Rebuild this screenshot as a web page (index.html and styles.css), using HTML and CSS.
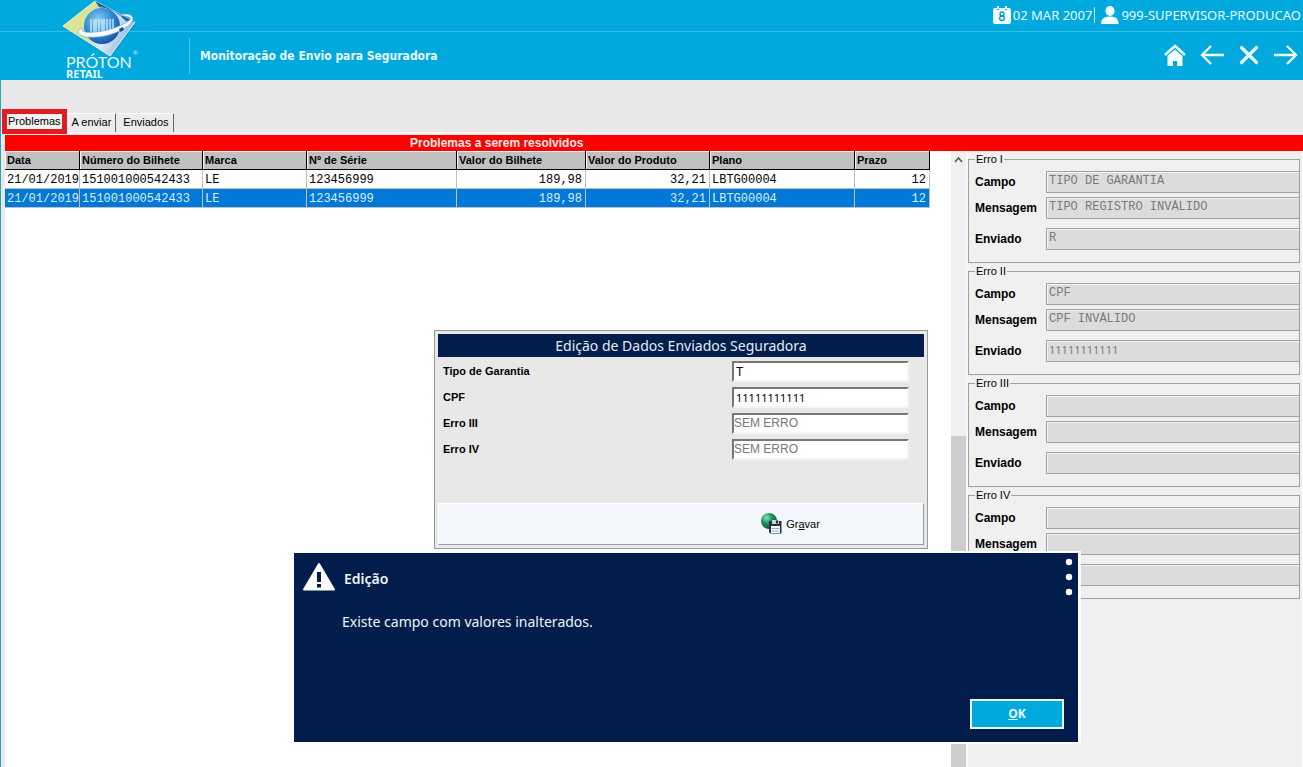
FILE: index.html
```html
<!DOCTYPE html>
<html lang="pt-BR">
<head>
<meta charset="utf-8">
<title>Monitoração de Envio para Seguradora</title>
<link rel="stylesheet" href="styles.css">
</head>
<body>
<header class="header">
  <div class="status">
    <svg width="18" height="18" viewBox="0 0 18 18" aria-hidden="true">
      <path fill="#f0ffff" d="M2 2h2v2h2V2h6v2h2V2h2q2 0 2 2v12q0 2-2 2H2q-2 0-2-2V4q0-2 2-2z"/>
      <path fill="#f0ffff" d="M4 0h2v3H4zM12 0h2v3h-2z"/>
      <circle cx="9" cy="8" r="2" fill="none" stroke="#0a8fc0" stroke-width="1.3"/>
      <circle cx="9" cy="12.2" r="2.3" fill="none" stroke="#0a8fc0" stroke-width="1.3"/>
    </svg>
    <span class="date">02 MAR 2007</span>
    <span class="sep"></span>
    <svg width="18" height="18" viewBox="0 0 18 18" aria-hidden="true">
      <ellipse cx="9" cy="5" rx="4.6" ry="5" fill="#f0ffff"/>
      <path fill="#f0ffff" d="M0 18q0-5 3.5-6.500L7 10.500h4l3.500 1Q17.500 13 17.500 18z"/>
    </svg>
    <span>999-SUPERVISOR-PRODUCAO</span>
  </div>
  <div class="logo">
    <svg width="90" height="80" viewBox="0 0 90 80" role="img" aria-label="Próton Retail">
      <defs>
        <linearGradient id="sq" x1="0" y1="0.300" x2="1" y2="0.700">
          <stop offset="0" stop-color="#dfe58a"/><stop offset="0.450" stop-color="#d3e3a0"/>
          <stop offset="0.650" stop-color="#dbe6f6"/><stop offset="1" stop-color="#7fa6dc"/>
        </linearGradient>
        <radialGradient id="gl" cx="0.400" cy="0.350" r="0.700">
          <stop offset="0" stop-color="#8fd0f5"/><stop offset="0.600" stop-color="#2b86d2"/><stop offset="1" stop-color="#134f9c"/>
        </radialGradient>
      </defs>
      <path d="M9 30l42 27 25-32-4-2-22 29z" fill="#087da8" opacity="0.400"/>
      <path d="M36 1l40 21-25 34L4 26z" fill="url(#sq)" stroke="#edf4d8"/>
      <path d="M36 1l40 21-9-1Q55 8 40 7z" fill="#1764ae"/>
      <circle cx="43" cy="26" r="18" fill="url(#gl)"/>
      <path d="M32 19v13M35 19v13M37 19v13M40 19v13M43 19v13M45 19v13M48 19v13M51 19v13M54 19v13" stroke="#d4efff" stroke-width="1.300"/>
      <path d="M60 15c12-3 17 2 12 8-8 9-29 16-44 14-12-2-10-7-5-9-1 4 4 5 13 4 17-1 38-11 35-14-2-2-6-2-11-3z" fill="#f6fbff" stroke="#6ba4d4" stroke-width="0.600"/>
      <path d="M60 29l4-2 1 3-4 2z" fill="#0d4d9e"/>
      <text x="7" y="68" class="logo-name">PRÓTON</text>
      <text x="74" y="55" class="logo-reg">®</text>
      <text x="7" y="78" class="logo-sub">RETAIL</text>
    </svg>
  </div>
  <h1 class="title">Monitoração de Envio para Seguradora</h1>
  <nav class="nav">
    <button type="button" aria-label="Início"><svg width="24" height="24" viewBox="0 0 24 24"><path d="M2 12L12 3l10 9" fill="none" stroke="#f0ffff" stroke-width="2.500"/><path d="M4.500 13L12 6.500 19.500 13v10H14v-5h-4v5H4.500z" fill="#f0ffff"/></svg></button>
    <button type="button" aria-label="Voltar"><svg width="24" height="24" viewBox="0 0 24 24"><path d="M24 12H2M11 3L2 12l9 9" fill="none" stroke="#f0ffff" stroke-width="2.400"/></svg></button>
    <button type="button" aria-label="Fechar"><svg width="24" height="24" viewBox="0 0 24 24"><path d="M4.500 4.500l15 15M19.500 4.500l-15 15" fill="none" stroke="#f0ffff" stroke-width="3.200" stroke-linecap="round"/></svg></button>
    <button type="button" aria-label="Avançar"><svg width="24" height="24" viewBox="0 0 24 24"><path d="M0 12h22M13 3l9 9-9 9" fill="none" stroke="#f0ffff" stroke-width="2.400"/></svg></button>
  </nav>
</header>

<main class="page">
  <div class="tabs" role="tablist">
    <button type="button" role="tab" aria-selected="true" class="tab tab-active">Problemas</button>
    <button type="button" role="tab" class="tab">A enviar</button>
    <button type="button" role="tab" class="tab">Enviados</button>
  </div>
  <h2 class="banner">Problemas a serem resolvidos</h2>
  <div class="work">
    <section class="list">
      <table class="grid">
        <colgroup><col class="c-date"><col class="c-ticket"><col class="c-brand"><col class="c-serial"><col class="c-value"><col class="c-product"><col class="c-plan"><col class="c-term"></colgroup>
        <thead><tr><th>Data</th><th>Número do Bilhete</th><th>Marca</th><th>Nº de Série</th><th>Valor do Bilhete</th><th>Valor do Produto</th><th>Plano</th><th>Prazo</th></tr></thead>
        <tbody>
          <tr><td>21/01/2019</td><td>151001000542433</td><td>LE</td><td>123456999</td><td class="num">189,98</td><td class="num">32,21</td><td>LBTG00004</td><td class="num">12</td></tr>
          <tr class="selected"><td>21/01/2019</td><td>151001000542433</td><td>LE</td><td>123456999</td><td class="num">189,98</td><td class="num">32,21</td><td>LBTG00004</td><td class="num">12</td></tr>
        </tbody>
      </table>
    </section>
    <div class="scrollbar">
      <svg width="15" height="18" viewBox="0 0 15 18" aria-hidden="true"><path d="M4 11l3.500-4L11 11" fill="none" stroke="#555" stroke-width="1.600"/></svg>
      <div class="thumb"></div>
    </div>
    <aside class="errors">
      <fieldset class="error"><legend>Erro I</legend>
        <label for="c1">Campo</label><input id="c1" value="TIPO DE GARANTIA" disabled>
        <label for="m1">Mensagem</label><input id="m1" value="TIPO REGISTRO INVÁLIDO" disabled>
        <label for="e1" class="sent">Enviado</label><input id="e1" class="sent" value="R" disabled>
      </fieldset>
      <fieldset class="error"><legend>Erro II</legend>
        <label for="c2">Campo</label><input id="c2" value="CPF" disabled>
        <label for="m2">Mensagem</label><input id="m2" value="CPF INVÁLIDO" disabled>
        <label for="e2" class="sent">Enviado</label><input id="e2" class="sent doc" value="11111111111" disabled>
      </fieldset>
      <fieldset class="error"><legend>Erro III</legend>
        <label for="c3">Campo</label><input id="c3" disabled>
        <label for="m3">Mensagem</label><input id="m3" disabled>
        <label for="e3" class="sent">Enviado</label><input id="e3" class="sent" disabled>
      </fieldset>
      <fieldset class="error"><legend>Erro IV</legend>
        <label for="c4">Campo</label><input id="c4" disabled>
        <label for="m4">Mensagem</label><input id="m4" disabled>
        <label for="e4" class="sent">Enviado</label><input id="e4" class="sent" disabled>
      </fieldset>
    </aside>
  </div>
</main>

<section class="editor" role="dialog" aria-labelledby="editor-title">
  <h2 id="editor-title" class="editor-title">Edição de Dados Enviados Seguradora</h2>
  <form class="editor-form">
    <label for="f1">Tipo de Garantia</label><input id="f1" value="T">
    <label for="f2">CPF</label><input id="f2" class="doc" value="11111111111">
    <label for="f3">Erro III</label><input id="f3" value="SEM ERRO" disabled>
    <label for="f4">Erro IV</label><input id="f4" value="SEM ERRO" disabled>
  </form>
  <div class="editor-foot">
    <button type="button" class="save">
      <svg width="21" height="21" viewBox="0 0 21 21" aria-hidden="true">
        <defs><radialGradient id="ball" cx="0.350" cy="0.300" r="0.750"><stop offset="0" stop-color="#8fe0b4"/><stop offset="0.450" stop-color="#1f9660"/><stop offset="1" stop-color="#0a4a30"/></radialGradient></defs>
        <circle cx="8" cy="8" r="8" fill="url(#ball)"/>
        <path d="M8 8h12.500v12.500H9.500L8 19z" fill="#25343f"/>
        <path d="M11 7h7v4h-7z" fill="#c4d3dc"/><path d="M15 7.500h2v3h-2z" fill="#25343f"/>
        <path d="M10 13h9v7h-9z" fill="#fff"/><path d="M10.500 15.500h8M10.500 18h8" stroke="#7fb0c8"/>
      </svg>
      <span>Gr<u>a</u>var</span>
    </button>
  </div>
</section>

<section class="alert" role="alertdialog" aria-labelledby="alert-title">
  <div class="alert-head">
    <svg width="34" height="30" viewBox="0 0 34 30" aria-hidden="true"><path d="M17 2L32 27.500H2z" fill="#fff" stroke="#fff" stroke-width="2" stroke-linejoin="round"/><path d="M15 10h4v10h-4zM15 22h4v3.500h-4z" fill="#001d4b"/></svg>
    <h2 id="alert-title">Edição</h2>
    <button type="button" class="more" aria-label="Mais opções"><svg width="8" height="38" viewBox="0 0 8 38"><g fill="#fff"><circle cx="4" cy="4" r="3.200"/><circle cx="4" cy="19" r="3.200"/><circle cx="4" cy="34" r="3.200"/></g></svg></button>
  </div>
  <p>Existe campo com valores inalterados.</p>
  <button type="button" class="ok"><u>O</u>K</button>
</section>
</body>
</html>
```

FILE: styles.css
```css
* { box-sizing: border-box; }

body {
  margin: 0;
  min-height: 100vh;
  display: flex;
  flex-direction: column;
  position: relative;
  background: #e8e8e8;
  color: #000;
  font: 11px/14px "Liberation Sans", Arial, sans-serif;
}

h1, h2, p { margin: 0; }
button { border: 0; padding: 0; background: none; font: inherit; color: inherit; }
svg { display: block; }

/* Header */
.header {
  display: grid;
  grid-template-columns: 189px 1fr auto;
  grid-template-rows: 32px 48px;
  background: #00a9dd;
  color: #e6fbff;
}
.status {
  grid-area: 1 / 1 / 2 / -1;
  display: flex;
  justify-content: flex-end;
  align-items: center;
  gap: 2px;
  padding: 0 2px 1px 0;
  border-bottom: 1px solid #35bde5;
  font: 13px/18px "Noto Sans", "Open Sans", sans-serif;
}
.status .sep { width: 1px; height: 16px; background: #c4f1fc; margin-right: 4px; }
.logo { grid-area: 1 / 1 / 3 / 2; padding-left: 59px; }
.logo-name { font: 16px Lato, sans-serif; fill: #e6fbff; }
.logo-sub { font: bold 11px "Noto Sans", sans-serif; fill: #e6fbff; }
.logo-reg { font: 6px "Liberation Sans", sans-serif; fill: #e6fbff; }
.title {
  grid-area: 2 / 2;
  align-self: center;
  padding-left: 10px;
  border-left: 1px solid #4cc6e9;
  font: bold 12px/36px "DejaVu Sans Condensed", "DejaVu Sans", sans-serif;
}
.nav { grid-area: 2 / 3; display: flex; align-items: center; gap: 13px; padding: 0 5px 2px 0; }

/* Tabs */
.page { flex: 1; display: flex; flex-direction: column; border-left: 1px solid #2f9fb8; }
.tabs {
  display: flex;
  align-items: flex-end;
  padding: 29px 0 0 1px;
  height: 54px;
  border-bottom: 2px solid #fbf3f3;
}
.tab {
  height: 19px;
  margin-right: 2px;
  padding: 0 4px 2px 5px;
  border-right: 1px solid #666;
  border-top: 1px solid #fff;
  background: #ececec;
}
.tab-active {
  height: 25px;
  margin: 0;
  margin-bottom: -2px;
  border: 5px solid #e01b24;
  padding: 0 1px 2px 1px;
  background: #f2f2f2;
}
.banner {
  margin: 1px 0 0 4px;
  padding-left: 405px;
  background: #fe0000;
  color: #ffe9e9;
  font: bold 12px/16px "Liberation Sans", Arial, sans-serif;
}

/* Work area */
.work { flex: 1; display: flex; padding-left: 4px; }
.list { flex: 1; min-width: 0; background: #fff; }
.grid { width: 925px; border-collapse: separate; border-spacing: 0; table-layout: fixed; }
.c-date { width: 75px; }
.c-ticket { width: 123px; }
.c-brand { width: 104px; }
.c-serial { width: 150px; }
.c-value { width: 129px; }
.c-product { width: 124px; }
.c-plan { width: 145px; }
.c-term { width: 75px; }
.grid th, .grid td { height: 19px; padding: 0 2px; white-space: nowrap; overflow: hidden; text-align: left; }
.grid th {
  background: #c0c0c0;
  border-right: 1px solid #000;
  border-bottom: 1px solid #000;
  box-shadow: inset 1px 1px #f4f4f4;
  font: bold 11px/16px "Liberation Sans", Arial, sans-serif;
}
.grid td {
  padding-top: 2px;
  border-right: 1px solid #c0c0c0;
  border-bottom: 1px solid #c0c0c0;
  font: 12px/16px "Liberation Mono", "Courier New", monospace;
}
.grid td.num { text-align: right; padding-right: 3px; }
.grid .selected td { background: #0078d7; color: #d8f0ff; }

.scrollbar { width: 17px; display: flex; flex-direction: column; background: #f0f0f0; border-right: 2px solid #f8f8f8; }
.thumb { flex: 1; margin-top: 267px; background: #cdcdcd; }

/* Error details */
.errors { width: 335px; padding: 1px 2px 0 0; background: #f0f0f0; border-right: 1px solid #fff; }
.error {
  display: grid;
  grid-template-columns: 71px 1fr;
  row-gap: 4px;
  align-items: center;
  margin: 0 0 1px;
  padding: 5px 0 12px 6px;
  border: 1px solid #a0a0a0;
  min-width: 0;
}
.error legend { padding: 0 1px; line-height: 14px; }
.error label { font-size: 12px; font-weight: bold; }
.error .sent { margin-top: 5px; }
.error input {
  width: 100%;
  min-width: 0;
  height: 22px;
  padding: 0 2px 3px;
  border: 1px solid #a0a0a0;
  border-right: 0;
  border-radius: 0;
  box-shadow: inset 1px 1px #f4f4f4;
  background: #dcdcdc;
  color: #7a7a7a;
  font: 12px/16px "Liberation Mono", "Courier New", monospace;
}
.error input.doc { font: 11px/16px "Noto Sans", sans-serif; }

/* Edit window */
.editor {
  position: absolute;
  left: 434px;
  top: 330px;
  width: 494px;
  padding: 3px;
  border: 1px solid #999;
  background: #e8e8e8;
}
.editor-title {
  background: #001d4b;
  color: #e4ecf4;
  text-align: center;
  font: 14px/23px "Noto Sans", "Open Sans", sans-serif;
}
.editor-form {
  display: grid;
  grid-template-columns: 1fr 177px;
  row-gap: 5px;
  align-items: center;
  padding: 4px 15px 43px 5px;
}
.editor-form label { font-weight: bold; padding-bottom: 2px; }
.editor-form input {
  width: 100%;
  height: 21px;
  padding: 0 2px;
  border: 2px solid;
  border-color: #777 #f4f4f4 #f4f4f4 #777;
  border-radius: 0;
  background: #fff;
  color: #000;
  font: 12px/16px "Liberation Sans", Arial, sans-serif;
}
.editor-form input:disabled { color: #777; padding: 0 0 2px; }
.editor-form input.doc { font: 11px/16px "Noto Sans", sans-serif; }
.editor-foot {
  display: flex;
  justify-content: center;
  padding: 9px 0 10px 219px;
  border: 1px solid;
  border-color: #fff #999 #999 #fff;
  background: #f3f7fc;
}
.save { display: flex; align-items: center; gap: 4px; }

/* Alert window */
.alert {
  position: absolute;
  left: 294px;
  top: 551px;
  width: 787px;
  padding: 5px 14px 13px 8px;
  display: flex;
  flex-direction: column;
  border: solid #fff;
  border-width: 2px 3px 2px 0;
  background: #001d4b;
  color: #f0f4f8;
  font: 14px/20px "Noto Sans", "Open Sans", sans-serif;
}
.alert-head { display: flex; align-items: center; gap: 8px; margin-right: -9px; }
.alert-head h2 { flex: 1; padding-top: 3px; font-size: 14px; font-weight: 600; line-height: 20px; }
.alert p { padding: 16px 0 0 40px; height: 98px; }
.ok {
  align-self: flex-end;
  width: 94px;
  height: 30px;
  margin-top: 5px;
  border: 2px solid #e8fbff;
  background: #00a9dd;
  color: #e6fbff;
  font: bold 12px/20px "Open Sans", "Noto Sans", sans-serif;
}
```
